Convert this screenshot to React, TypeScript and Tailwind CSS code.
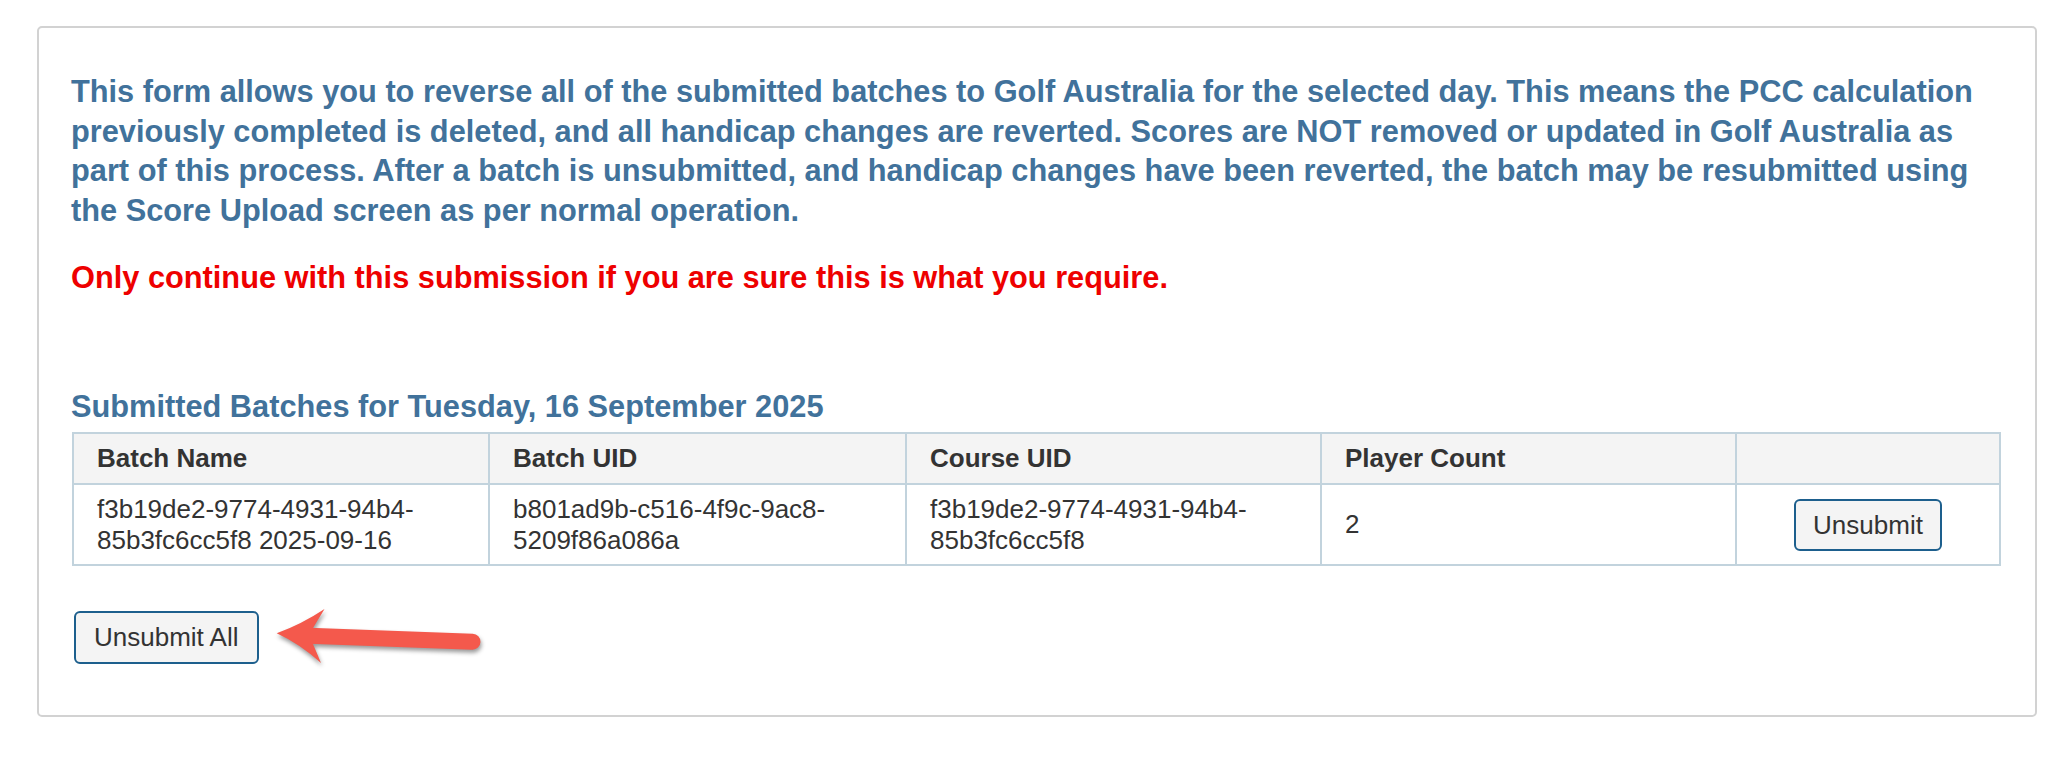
export default function App() {
  return (
    <div className="min-h-screen bg-white pl-[37px] pr-[35px] pt-[26px] font-['Liberation_Sans',Arial,sans-serif]">
      <div className="relative rounded-[5px] border-2 border-[#d2d2d2] px-[32px] pt-[44px] pb-[51px]">
        <p className="text-[30.75px] font-bold leading-[39.5px] text-[#41729b]">
          This form allows you to reverse all of the submitted batches to Golf Australia for the selected day. This means the PCC calculation
          previously completed is deleted, and all handicap changes are reverted. Scores are NOT removed or updated in Golf Australia as
          part of this process. After a batch is unsubmitted, and handicap changes have been reverted, the batch may be resubmitted using
          the Score Upload screen as per normal operation.
        </p>
        <p className="mt-[28px] text-[30.75px] font-bold leading-[39px] text-[#ee0000]">
          Only continue with this submission if you are sure this is what you require.
        </p>

        <h2 className="mt-[90px] text-[30.75px] font-bold leading-[39px] text-[#41729b]">
          Submitted Batches for Tuesday, 16 September 2025
        </h2>

        <div className="mt-[6px] pl-[1px] pr-[2px]">
          <table className="w-full table-fixed border-collapse text-[26px] text-[#333333]">
            <colgroup>
              <col className="w-[416px]" />
              <col className="w-[417px]" />
              <col className="w-[415px]" />
              <col className="w-[415px]" />
              <col />
            </colgroup>
            <thead>
              <tr className="h-[51px] bg-[#f4f4f4]">
                <th className="border-2 border-[#c2d3dd] px-[23px] text-left font-bold leading-[31px]">Batch Name</th>
                <th className="border-2 border-[#c2d3dd] px-[23px] text-left font-bold leading-[31px]">Batch UID</th>
                <th className="border-2 border-[#c2d3dd] px-[23px] text-left font-bold leading-[31px]">Course UID</th>
                <th className="border-2 border-[#c2d3dd] px-[23px] text-left font-bold leading-[31px]">Player Count</th>
                <th className="border-2 border-[#c2d3dd] px-[23px]"></th>
              </tr>
            </thead>
            <tbody>
              <tr className="h-[81px]">
                <td className="border-2 border-[#c2d3dd] px-[23px] leading-[31px]">
                  f3b19de2-9774-4931-94b4-
                  <br />
                  85b3fc6cc5f8 2025-09-16
                </td>
                <td className="border-2 border-[#c2d3dd] px-[23px] leading-[31px]">
                  b801ad9b-c516-4f9c-9ac8-
                  <br />
                  5209f86a086a
                </td>
                <td className="border-2 border-[#c2d3dd] px-[23px] leading-[31px]">
                  f3b19de2-9774-4931-94b4-
                  <br />
                  85b3fc6cc5f8
                </td>
                <td className="border-2 border-[#c2d3dd] px-[23px] leading-[31px]">2</td>
                <td className="border-2 border-[#c2d3dd] text-center">
                  <button className="rounded-[6px] border-2 border-[#1d5f8d] bg-[#f4f4f4] px-[17px] py-[8px] text-[26px] leading-[32px] text-[#333333]">
                    Unsubmit
                  </button>
                </td>
              </tr>
            </tbody>
          </table>
        </div>

        <div className="mt-[45px] flex pl-[3px]">
          <button className="rounded-[6px] border-2 border-[#1d5f8d] bg-[#f4f4f4] px-[18px] py-[9px] text-[26px] leading-[31px] text-[#333333]">
            Unsubmit All
          </button>
        </div>

        <svg
          className="absolute left-[230px] top-[571px] drop-shadow-[1px_3px_2px_rgba(0,0,0,0.4)]"
          width="225"
          height="78"
          viewBox="0 0 225 78"
        >
          <line x1="40" y1="36.7" x2="203.5" y2="42.7" stroke="#f4594c" strokeWidth="16" strokeLinecap="round" />
          <path d="M7.7 34.3 Q33 25 55.5 10 L44 29 L44 45 L52 64 Q31 45 7.7 34.3 Z" fill="#f4594c" />
        </svg>
      </div>
    </div>
  )
}
